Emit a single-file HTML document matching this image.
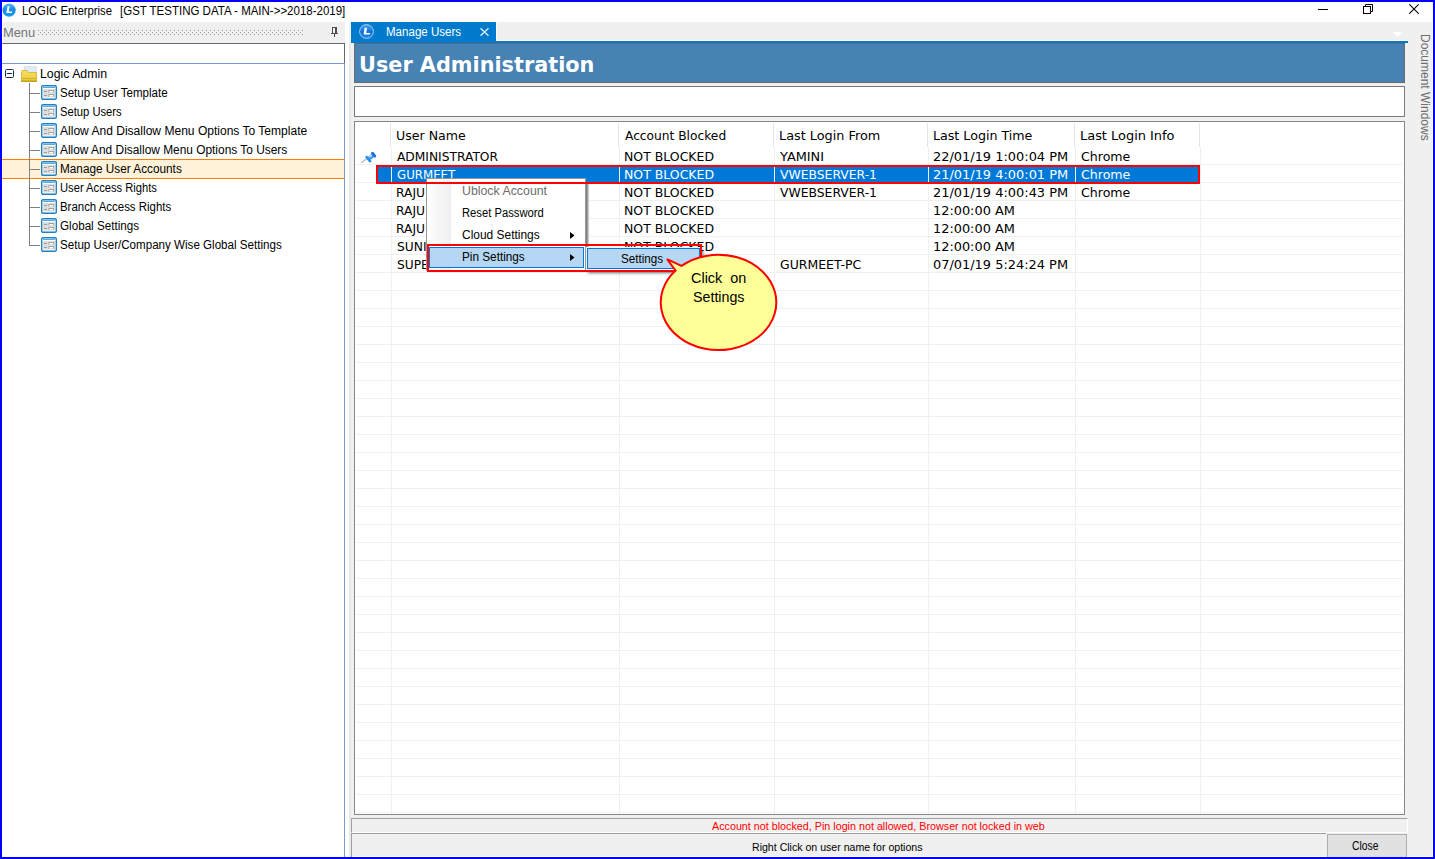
<!DOCTYPE html>
<html lang="en">
<head>
<meta charset="utf-8">
<title>LOGIC Enterprise</title>
<style>
html,body{margin:0;padding:0;}
body{width:1435px;height:859px;position:relative;overflow:hidden;background:#0000ff;font-family:"Liberation Sans",sans-serif;font-size:12px;color:#000;}
.a{position:absolute;}
.t{position:absolute;white-space:nowrap;line-height:1;}
#win{left:2px;top:2px;width:1431px;height:855px;background:#f0f0f0;box-sizing:border-box;border:1px solid #fff;}
#title{left:2px;top:2px;width:1431px;height:20px;background:#fff;}
.seg{font-family:"Liberation Sans",sans-serif;font-size:12px;}
.vd{font-family:"DejaVu Sans","Liberation Sans",sans-serif;font-size:12px;}
/* tree */
.ti{position:absolute;left:41px;width:16px;height:15px;}
.tl{position:absolute;left:60px;white-space:nowrap;line-height:1;font-size:12px;}
.hc{position:absolute;left:29px;width:11px;height:1px;background:#808080;}
/* grid */
.gl{position:absolute;left:356px;width:1047px;height:1px;background:#f0f0f0;}
.vl{position:absolute;top:147px;width:1px;height:667px;background:#f0f0f0;}
.c{position:absolute;white-space:nowrap;line-height:1;font-family:"DejaVu Sans","Liberation Sans",sans-serif;font-size:12px;}
.w{color:#fff;}
.mi{position:absolute;white-space:nowrap;line-height:1;font-size:12px;left:462px;}
</style>
</head>
<body>
<div id="win" class="a"></div>
<div id="title" class="a"></div>

<!-- title bar -->
<svg class="a" style="left:2px;top:3px" width="15" height="15" viewBox="0 0 15 15">
  <defs><linearGradient id="lg" x1="0" y1="0" x2="0" y2="1"><stop offset="0" stop-color="#5db8f6"/><stop offset="0.45" stop-color="#1a8be6"/><stop offset="1" stop-color="#0d9cf2"/></linearGradient></defs>
  <circle cx="7.1" cy="7.05" r="6.6" fill="url(#lg)"/>
  <path d="M5.6 3.3 L7.7 3.3 L6.7 8.6 L10.3 8.6 L10 10.1 L4.3 10.1 Z" fill="#fff"/>
</svg>
<div class="t seg" id="ttl" style="left:21.7px;transform-origin:0 0;transform:scaleX(0.9436);top:5px;">LOGIC Enterprise</div>
<div class="t seg" id="ttl2" style="left:119.79px;transform-origin:0 0;transform:scaleX(0.9578);top:5px;">[GST TESTING DATA - MAIN-&gt;&gt;2018-2019]</div>
<div class="a" style="left:1318px;top:9px;width:10px;height:1px;background:#000"></div>
<svg class="a" style="left:1363px;top:4px" width="10" height="10" viewBox="0 0 10 10" fill="none" stroke="#000" stroke-width="1">
  <rect x="0.5" y="2.5" width="7" height="7"/><path d="M2.5 2.5V0.5H9.5V7.5H7.5"/>
</svg>
<svg class="a" style="left:1409px;top:4px" width="10" height="10" viewBox="0 0 10 10" stroke="#000" stroke-width="1.05"><path d="M0.3 0.3L9.7 9.7M9.7 0.3L0.3 9.7"/></svg>

<!-- left panel -->
<div class="t seg" id="menu" style="left:3.48px;transform-origin:0 0;transform:scaleX(1.0709);top:27px;color:#757575;">Menu</div>
<svg class="a" style="left:38px;top:30px" width="265" height="5" viewBox="0 0 265 5"><defs><pattern id="gp" width="4" height="4" patternUnits="userSpaceOnUse"><rect x="0" y="0" width="1" height="1" fill="#999"/><rect x="2" y="2" width="1" height="1" fill="#999"/></pattern></defs><rect width="265" height="5" fill="url(#gp)"/></svg>
<svg class="a" style="left:331px;top:27px" width="7" height="10" viewBox="0 0 7 10" fill="#505050"><rect x="1" y="0" width="1" height="6"/><rect x="1" y="0" width="5" height="1"/><rect x="4" y="0" width="2" height="6"/><rect x="0" y="6" width="7" height="1"/><rect x="3" y="7" width="1" height="3"/></svg>
<div class="a" style="left:2px;top:43px;width:343px;height:814px;background:#fff;"></div>
<div class="a" style="left:2px;top:43px;width:343px;height:1px;background:#696969;"></div>
<div class="a" style="left:344px;top:43px;width:1px;height:20px;background:#696969;"></div>
<div class="a" style="left:2px;top:63px;width:343px;height:1px;background:#7a9bd2;"></div>
<div class="a" style="left:344px;top:63px;width:1px;height:794px;background:#7a9bd2;"></div>

<div class="a" style="left:345px;top:22px;width:4px;height:835px;background:#fff;"></div>
<div class="a" style="left:349px;top:43px;width:2px;height:814px;background:#e9e9ec;"></div>
<!-- tree -->
<div class="a" style="left:2px;top:159px;width:342px;height:20px;background:#fff2d9;border-top:1px solid #ff8000;border-bottom:1px solid #ff8000;box-sizing:border-box;"></div>
<div class="a" style="left:5px;top:69px;width:9px;height:9px;box-sizing:border-box;border:1px solid #10305a;border-radius:1.5px;background:#fff"></div>
<div class="a" style="left:7px;top:73px;width:5px;height:1px;background:#0a1f3f"></div>
<svg class="a" style="left:21px;top:66px" width="16" height="16" viewBox="0 0 16 16">
  <defs><linearGradient id="fg" x1="0" y1="0" x2="0" y2="1"><stop offset="0" stop-color="#f5e070"/><stop offset="0.55" stop-color="#efd24c"/><stop offset="1" stop-color="#e4c232"/></linearGradient></defs>
  <rect x="3.5" y="0.5" width="12" height="8" fill="#dcebf6" stroke="#dfe3e6" stroke-width="1"/>
  <path d="M0 5.5 Q0 4 1.5 4 H5.5 Q6.5 4 7 5 L7.6 6 H16 V16 H0 Z" fill="url(#fg)"/>
  <path d="M0.5 5.5 Q0.5 4.5 1.5 4.5 H5.5 Q6.2 4.5 6.7 5.3 L7.3 6.5 H15.5 V15.5 H0.5 Z" fill="none" stroke="#dcbc36" stroke-width="1"/>
  <rect x="0.5" y="12" width="15" height="1" fill="#d3b32a"/>
  <rect x="0" y="14.5" width="16" height="1.5" fill="#c4a11c"/>
</svg>
<div class="tl" id="tlr" style="left:39.53px;transform-origin:0 0;transform:scaleX(1.0247);top:68px">Logic Admin</div>
<div class="a" style="left:29px;top:83px;width:1px;height:162px;background:#808080"></div>
<div class="hc" style="top:93px"></div>
<svg class="ti" style="top:85px" width="16" height="15" viewBox="0 0 16 15"><rect x="0.7" y="0.7" width="14.6" height="13.6" rx="1.4" fill="#fff" stroke="#1c82c2" stroke-width="1.4"/><rect x="2" y="2" width="12" height="1" fill="#55ace3"/><rect x="2" y="4" width="12" height="8.5" fill="#dedede"/><rect x="3" y="6" width="3" height="1" fill="#9c9c9c"/><rect x="7.5" y="5" width="5.5" height="2.6" fill="#9a9a9a"/><rect x="8.3" y="5.9" width="3.9" height="1.7" fill="#fff"/><rect x="3" y="10" width="3" height="1" fill="#9c9c9c"/><rect x="7.5" y="9" width="5.5" height="2.6" fill="#9a9a9a"/><rect x="8.3" y="9.9" width="3.9" height="1.7" fill="#fff"/></svg>
<div class="tl" id="tl0" style="left:59.72px;transform-origin:0 0;transform:scaleX(0.9619);top:87px">Setup User Template</div>
<div class="hc" style="top:112px"></div>
<svg class="ti" style="top:104px" width="16" height="15" viewBox="0 0 16 15"><rect x="0.7" y="0.7" width="14.6" height="13.6" rx="1.4" fill="#fff" stroke="#1c82c2" stroke-width="1.4"/><rect x="2" y="2" width="12" height="1" fill="#55ace3"/><rect x="2" y="4" width="12" height="8.5" fill="#dedede"/><rect x="3" y="6" width="3" height="1" fill="#9c9c9c"/><rect x="7.5" y="5" width="5.5" height="2.6" fill="#9a9a9a"/><rect x="8.3" y="5.9" width="3.9" height="1.7" fill="#fff"/><rect x="3" y="10" width="3" height="1" fill="#9c9c9c"/><rect x="7.5" y="9" width="5.5" height="2.6" fill="#9a9a9a"/><rect x="8.3" y="9.9" width="3.9" height="1.7" fill="#fff"/></svg>
<div class="tl" id="tl1" style="left:59.73px;transform-origin:0 0;transform:scaleX(0.9335);top:106px">Setup Users</div>
<div class="hc" style="top:131px"></div>
<svg class="ti" style="top:123px" width="16" height="15" viewBox="0 0 16 15"><rect x="0.7" y="0.7" width="14.6" height="13.6" rx="1.4" fill="#fff" stroke="#1c82c2" stroke-width="1.4"/><rect x="2" y="2" width="12" height="1" fill="#55ace3"/><rect x="2" y="4" width="12" height="8.5" fill="#dedede"/><rect x="3" y="6" width="3" height="1" fill="#9c9c9c"/><rect x="7.5" y="5" width="5.5" height="2.6" fill="#9a9a9a"/><rect x="8.3" y="5.9" width="3.9" height="1.7" fill="#fff"/><rect x="3" y="10" width="3" height="1" fill="#9c9c9c"/><rect x="7.5" y="9" width="5.5" height="2.6" fill="#9a9a9a"/><rect x="8.3" y="9.9" width="3.9" height="1.7" fill="#fff"/></svg>
<div class="tl" id="tl2" style="left:60.2px;transform-origin:0 0;transform:scaleX(1.0035);top:125px">Allow And Disallow Menu Options To Template</div>
<div class="hc" style="top:150px"></div>
<svg class="ti" style="top:142px" width="16" height="15" viewBox="0 0 16 15"><rect x="0.7" y="0.7" width="14.6" height="13.6" rx="1.4" fill="#fff" stroke="#1c82c2" stroke-width="1.4"/><rect x="2" y="2" width="12" height="1" fill="#55ace3"/><rect x="2" y="4" width="12" height="8.5" fill="#dedede"/><rect x="3" y="6" width="3" height="1" fill="#9c9c9c"/><rect x="7.5" y="5" width="5.5" height="2.6" fill="#9a9a9a"/><rect x="8.3" y="5.9" width="3.9" height="1.7" fill="#fff"/><rect x="3" y="10" width="3" height="1" fill="#9c9c9c"/><rect x="7.5" y="9" width="5.5" height="2.6" fill="#9a9a9a"/><rect x="8.3" y="9.9" width="3.9" height="1.7" fill="#fff"/></svg>
<div class="tl" id="tl3" style="left:60.2px;transform-origin:0 0;transform:scaleX(0.9913);top:144px">Allow And Disallow Menu Options To Users</div>
<div class="hc" style="top:169px"></div>
<svg class="ti" style="top:161px" width="16" height="15" viewBox="0 0 16 15"><rect x="0.7" y="0.7" width="14.6" height="13.6" rx="1.4" fill="#fff" stroke="#1c82c2" stroke-width="1.4"/><rect x="2" y="2" width="12" height="1" fill="#55ace3"/><rect x="2" y="4" width="12" height="8.5" fill="#dedede"/><rect x="3" y="6" width="3" height="1" fill="#9c9c9c"/><rect x="7.5" y="5" width="5.5" height="2.6" fill="#9a9a9a"/><rect x="8.3" y="5.9" width="3.9" height="1.7" fill="#fff"/><rect x="3" y="10" width="3" height="1" fill="#9c9c9c"/><rect x="7.5" y="9" width="5.5" height="2.6" fill="#9a9a9a"/><rect x="8.3" y="9.9" width="3.9" height="1.7" fill="#fff"/></svg>
<div class="tl" id="tl4" style="left:59.97px;transform-origin:0 0;transform:scaleX(0.9815);top:163px">Manage User Accounts</div>
<div class="hc" style="top:188px"></div>
<svg class="ti" style="top:180px" width="16" height="15" viewBox="0 0 16 15"><rect x="0.7" y="0.7" width="14.6" height="13.6" rx="1.4" fill="#fff" stroke="#1c82c2" stroke-width="1.4"/><rect x="2" y="2" width="12" height="1" fill="#55ace3"/><rect x="2" y="4" width="12" height="8.5" fill="#dedede"/><rect x="3" y="6" width="3" height="1" fill="#9c9c9c"/><rect x="7.5" y="5" width="5.5" height="2.6" fill="#9a9a9a"/><rect x="8.3" y="5.9" width="3.9" height="1.7" fill="#fff"/><rect x="3" y="10" width="3" height="1" fill="#9c9c9c"/><rect x="7.5" y="9" width="5.5" height="2.6" fill="#9a9a9a"/><rect x="8.3" y="9.9" width="3.9" height="1.7" fill="#fff"/></svg>
<div class="tl" id="tl5" style="left:60.46px;transform-origin:0 0;transform:scaleX(0.9314);top:182px">User Access Rights</div>
<div class="hc" style="top:207px"></div>
<svg class="ti" style="top:199px" width="16" height="15" viewBox="0 0 16 15"><rect x="0.7" y="0.7" width="14.6" height="13.6" rx="1.4" fill="#fff" stroke="#1c82c2" stroke-width="1.4"/><rect x="2" y="2" width="12" height="1" fill="#55ace3"/><rect x="2" y="4" width="12" height="8.5" fill="#dedede"/><rect x="3" y="6" width="3" height="1" fill="#9c9c9c"/><rect x="7.5" y="5" width="5.5" height="2.6" fill="#9a9a9a"/><rect x="8.3" y="5.9" width="3.9" height="1.7" fill="#fff"/><rect x="3" y="10" width="3" height="1" fill="#9c9c9c"/><rect x="7.5" y="9" width="5.5" height="2.6" fill="#9a9a9a"/><rect x="8.3" y="9.9" width="3.9" height="1.7" fill="#fff"/></svg>
<div class="tl" id="tl6" style="left:60.4px;transform-origin:0 0;transform:scaleX(0.9523);top:201px">Branch Access Rights</div>
<div class="hc" style="top:226px"></div>
<svg class="ti" style="top:218px" width="16" height="15" viewBox="0 0 16 15"><rect x="0.7" y="0.7" width="14.6" height="13.6" rx="1.4" fill="#fff" stroke="#1c82c2" stroke-width="1.4"/><rect x="2" y="2" width="12" height="1" fill="#55ace3"/><rect x="2" y="4" width="12" height="8.5" fill="#dedede"/><rect x="3" y="6" width="3" height="1" fill="#9c9c9c"/><rect x="7.5" y="5" width="5.5" height="2.6" fill="#9a9a9a"/><rect x="8.3" y="5.9" width="3.9" height="1.7" fill="#fff"/><rect x="3" y="10" width="3" height="1" fill="#9c9c9c"/><rect x="7.5" y="9" width="5.5" height="2.6" fill="#9a9a9a"/><rect x="8.3" y="9.9" width="3.9" height="1.7" fill="#fff"/></svg>
<div class="tl" id="tl7" style="left:60.12px;transform-origin:0 0;transform:scaleX(0.9716);top:220px">Global Settings</div>
<div class="hc" style="top:245px"></div>
<svg class="ti" style="top:237px" width="16" height="15" viewBox="0 0 16 15"><rect x="0.7" y="0.7" width="14.6" height="13.6" rx="1.4" fill="#fff" stroke="#1c82c2" stroke-width="1.4"/><rect x="2" y="2" width="12" height="1" fill="#55ace3"/><rect x="2" y="4" width="12" height="8.5" fill="#dedede"/><rect x="3" y="6" width="3" height="1" fill="#9c9c9c"/><rect x="7.5" y="5" width="5.5" height="2.6" fill="#9a9a9a"/><rect x="8.3" y="5.9" width="3.9" height="1.7" fill="#fff"/><rect x="3" y="10" width="3" height="1" fill="#9c9c9c"/><rect x="7.5" y="9" width="5.5" height="2.6" fill="#9a9a9a"/><rect x="8.3" y="9.9" width="3.9" height="1.7" fill="#fff"/></svg>
<div class="tl" id="tl8" style="left:59.72px;transform-origin:0 0;transform:scaleX(0.9662);top:239px">Setup User/Company Wise Global Settings</div>

<!-- splitter / tabs -->
<div class="a" style="left:496px;top:22px;width:1px;height:19px;background:#fdf9f4;"></div><div class="a" style="left:496px;top:40px;width:912px;height:1px;background:#fdf9f4;"></div><div class="a" style="left:351px;top:22px;width:145px;height:21px;background:#007acc;"></div>
<div class="a" style="left:351px;top:41px;width:1057px;height:2px;background:#007acc;"></div>
<svg class="a" style="left:359px;top:24px" width="15" height="15" viewBox="0 0 15 15">
  <defs><linearGradient id="lg2" x1="0" y1="0" x2="0" y2="1"><stop offset="0" stop-color="#4aa3ee"/><stop offset="0.5" stop-color="#1173d8"/><stop offset="1" stop-color="#1d8be6"/></linearGradient></defs>
  <circle cx="7.5" cy="7.5" r="6.9" fill="url(#lg2)" stroke="#b5d3ee" stroke-width="0.9"/>
  <path d="M5.6 3.8 L8 3.8 L7.2 9 L11 9 L10.8 10.6 L4.6 10.6 Z" fill="#fff"/>
</svg>
<div class="t seg w" id="tabtxt" style="left:386.49px;transform-origin:0 0;transform:scaleX(0.9624);top:26px;">Manage Users</div>
<svg class="a" style="left:480px;top:28px" width="9" height="8" viewBox="0 0 9 8" stroke="#fff" stroke-width="1.15"><path d="M0.5 0.3L8.5 7.7M8.5 0.3L0.5 7.7"/></svg>
<svg class="a" style="left:1393px;top:32px" width="9" height="5" viewBox="0 0 9 5"><path d="M0 0H9L4.5 4.5Z" fill="#fff"/></svg>
<div class="t seg" id="docwin" style="left:1431px;top:34px;color:#6d6d6d;transform-origin:0 0;transform:rotate(90deg);">Document Windows</div>

<!-- header -->
<div class="a" style="left:354px;top:43px;width:1051px;height:40px;background:#4682b4;box-sizing:border-box;border:1px solid #6b6b6b;border-top-color:#5a6a78;"></div>
<div class="t" id="ua" style="left:359.27px;transform-origin:0 0;transform:scaleX(0.9752);top:54px;font-family:'DejaVu Sans',sans-serif;font-weight:bold;font-size:21.33px;color:#fff;">User Administration</div>
<div class="a" style="left:354px;top:86px;width:1051px;height:31px;background:#fff;box-sizing:border-box;border:1px solid #7a7a7a;"></div>

<!-- grid -->
<div class="a" style="left:354px;top:121px;width:1051px;height:694px;background:#fff;box-sizing:border-box;border:1px solid #828790;"></div>
<div class="gl" style="top:164px"></div>
<div class="gl" style="top:182px"></div>
<div class="gl" style="top:200px"></div>
<div class="gl" style="top:218px"></div>
<div class="gl" style="top:236px"></div>
<div class="gl" style="top:254px"></div>
<div class="gl" style="top:272px"></div>
<div class="gl" style="top:290px"></div>
<div class="gl" style="top:308px"></div>
<div class="gl" style="top:326px"></div>
<div class="gl" style="top:344px"></div>
<div class="gl" style="top:362px"></div>
<div class="gl" style="top:380px"></div>
<div class="gl" style="top:398px"></div>
<div class="gl" style="top:416px"></div>
<div class="gl" style="top:434px"></div>
<div class="gl" style="top:452px"></div>
<div class="gl" style="top:470px"></div>
<div class="gl" style="top:488px"></div>
<div class="gl" style="top:506px"></div>
<div class="gl" style="top:524px"></div>
<div class="gl" style="top:542px"></div>
<div class="gl" style="top:560px"></div>
<div class="gl" style="top:578px"></div>
<div class="gl" style="top:596px"></div>
<div class="gl" style="top:614px"></div>
<div class="gl" style="top:632px"></div>
<div class="gl" style="top:650px"></div>
<div class="gl" style="top:668px"></div>
<div class="gl" style="top:686px"></div>
<div class="gl" style="top:704px"></div>
<div class="gl" style="top:722px"></div>
<div class="gl" style="top:740px"></div>
<div class="gl" style="top:758px"></div>
<div class="gl" style="top:776px"></div>
<div class="gl" style="top:794px"></div>
<div class="gl" style="top:812px"></div>
<div class="vl" style="left:391px"></div>
<div class="a" style="left:390px;top:123px;width:1px;height:24px;background:#e5e5e8"></div>
<div class="vl" style="left:619px"></div>
<div class="a" style="left:618px;top:123px;width:1px;height:24px;background:#e5e5e8"></div>
<div class="vl" style="left:774px"></div>
<div class="a" style="left:773px;top:123px;width:1px;height:24px;background:#e5e5e8"></div>
<div class="vl" style="left:928px"></div>
<div class="a" style="left:927px;top:123px;width:1px;height:24px;background:#e5e5e8"></div>
<div class="vl" style="left:1075px"></div>
<div class="a" style="left:1074px;top:123px;width:1px;height:24px;background:#e5e5e8"></div>
<div class="vl" style="left:1200px"></div>
<div class="a" style="left:1199px;top:123px;width:1px;height:24px;background:#e5e5e8"></div>
<div class="a" style="left:378px;top:167px;width:820px;height:15px;background:#0078d7"></div>
<div class="a" style="left:391px;top:167px;width:1px;height:15px;background:#f0f0f0"></div>
<div class="a" style="left:619px;top:167px;width:1px;height:15px;background:#f0f0f0"></div>
<div class="a" style="left:774px;top:167px;width:1px;height:15px;background:#f0f0f0"></div>
<div class="a" style="left:928px;top:167px;width:1px;height:15px;background:#f0f0f0"></div>
<div class="a" style="left:1075px;top:167px;width:1px;height:15px;background:#f0f0f0"></div>
<div class="c" id="h0" style="left:396.35px;transform-origin:0 0;transform:scaleX(1.0472);top:130px">User Name</div>
<div class="c" id="h1" style="left:624.95px;transform-origin:0 0;transform:scaleX(1.0186);top:130px">Account Blocked</div>
<div class="c" id="h2" style="left:778.97px;transform-origin:0 0;transform:scaleX(1.0692);top:130px">Last Login From</div>
<div class="c" id="h3" style="left:932.79px;transform-origin:0 0;transform:scaleX(1.0531);top:130px">Last Login Time</div>
<div class="c" id="h4" style="left:1080.26px;transform-origin:0 0;transform:scaleX(1.0778);top:130px">Last Login Info</div>
<div class="c" id="r0c0" style="left:397.35px;transform-origin:0 0;transform:scaleX(1.0197);top:151px">ADMINISTRATOR</div>
<div class="c" id="r0c1" style="left:623.8px;transform-origin:0 0;transform:scaleX(1.0397);top:151px">NOT BLOCKED</div>
<div class="c" id="r0c2" style="left:780.25px;transform-origin:0 0;transform:scaleX(1.0745);top:151px">YAMINI</div>
<div class="c" id="r0c3" style="left:933.08px;transform-origin:0 0;transform:scaleX(1.0781);top:151px">22/01/19 1:00:04 PM</div>
<div class="c" id="r0c4" style="left:1080.82px;transform-origin:0 0;transform:scaleX(1.0484);top:151px">Chrome</div>
<div class="c w" id="r1c0" style="left:396.76px;transform-origin:0 0;transform:scaleX(0.9832);top:169px">GURMEET</div>
<div class="c w" id="r1c1" style="left:623.8px;transform-origin:0 0;transform:scaleX(1.0397);top:169px">NOT BLOCKED</div>
<div class="c w" id="r1c2" style="left:780.15px;transform-origin:0 0;transform:scaleX(1.0298);top:169px">VWEBSERVER-1</div>
<div class="c w" id="r1c3" style="left:933.08px;transform-origin:0 0;transform:scaleX(1.0781);top:169px">21/01/19 4:00:01 PM</div>
<div class="c w" id="r1c4" style="left:1080.82px;transform-origin:0 0;transform:scaleX(1.0484);top:169px">Chrome</div>
<div class="c" id="r2c0" style="left:396.23px;transform-origin:0 0;transform:scaleX(1.02);top:187px">RAJU</div>
<div class="c" id="r2c1" style="left:623.8px;transform-origin:0 0;transform:scaleX(1.0397);top:187px">NOT BLOCKED</div>
<div class="c" id="r2c2" style="left:780.15px;transform-origin:0 0;transform:scaleX(1.0298);top:187px">VWEBSERVER-1</div>
<div class="c" id="r2c3" style="left:933.08px;transform-origin:0 0;transform:scaleX(1.0781);top:187px">21/01/19 4:00:43 PM</div>
<div class="c" id="r2c4" style="left:1080.82px;transform-origin:0 0;transform:scaleX(1.0484);top:187px">Chrome</div>
<div class="c" id="r3c0" style="left:396.23px;transform-origin:0 0;transform:scaleX(1.02);top:205px">RAJU</div>
<div class="c" id="r3c1" style="left:623.8px;transform-origin:0 0;transform:scaleX(1.0397);top:205px">NOT BLOCKED</div>
<div class="c" id="r3c3" style="left:932.61px;transform-origin:0 0;transform:scaleX(1.0729);top:205px">12:00:00 AM</div>
<div class="c" id="r4c0" style="left:396.23px;transform-origin:0 0;transform:scaleX(1.02);top:223px">RAJU</div>
<div class="c" id="r4c1" style="left:623.8px;transform-origin:0 0;transform:scaleX(1.0397);top:223px">NOT BLOCKED</div>
<div class="c" id="r4c3" style="left:932.61px;transform-origin:0 0;transform:scaleX(1.0729);top:223px">12:00:00 AM</div>
<div class="c" id="r5c0" style="left:396.63px;transform-origin:0 0;transform:scaleX(1.02);top:241px">SUNIL</div>
<div class="c" id="r5c1" style="left:623.8px;transform-origin:0 0;transform:scaleX(1.0397);top:241px">NOT BLOCKED</div>
<div class="c" id="r5c3" style="left:932.61px;transform-origin:0 0;transform:scaleX(1.0729);top:241px">12:00:00 AM</div>
<div class="c" id="r6c0" style="left:396.63px;transform-origin:0 0;transform:scaleX(1.02);top:259px">SUPER</div>
<div class="c" id="r6c2" style="left:779.52px;transform-origin:0 0;transform:scaleX(1.0386);top:259px">GURMEET-PC</div>
<div class="c" id="r6c3" style="left:933.19px;transform-origin:0 0;transform:scaleX(1.0772);top:259px">07/01/19 5:24:24 PM</div>
<svg class="a" style="left:360px;top:150px" width="18" height="14" viewBox="360 150 18 14">
 <line x1="361.2" y1="162.9" x2="366.6" y2="158.7" stroke="#b0b0b0" stroke-width="1.1"/>
 <g transform="translate(371,156.9) rotate(-40)">
  <rect x="-4.7" y="-3.9" width="2.5" height="7.8" rx="1" fill="#2b8be6"/>
  <rect x="-2.4" y="-2" width="4.8" height="4" fill="#3b9bee"/>
  <rect x="2" y="-3.2" width="2.9" height="6.4" rx="1.4" fill="#1773dc"/>
  <rect x="-1.2" y="-1.5" width="3" height="1.2" fill="#e2f1fc"/>
 </g>
</svg>

<!-- status -->
<div class="a" style="left:351px;top:818px;width:1057px;height:15px;box-sizing:border-box;border-top:1px solid #a0a0a0;border-left:1px solid #a0a0a0;border-right:1px solid #fff;border-bottom:1px solid #fff;"></div>
<div class="t" id="st1" style="left:712.0px;transform-origin:0 0;transform:scaleX(0.9769);top:821px;color:#ff0000;font-size:11px;">Account not blocked, Pin login not allowed, Browser not locked in web</div>
<div class="a" style="left:351px;top:833px;width:975px;height:24px;box-sizing:border-box;border-top:1px solid #a0a0a0;border-left:1px solid #a0a0a0;"></div>
<div class="t" id="st2" style="left:752.33px;transform-origin:0 0;transform:scaleX(0.9616);top:842px;font-size:11px;">Right Click on user name for options</div>
<div class="a" style="left:1327px;top:834px;width:80px;height:23px;box-sizing:border-box;border:1px solid #adadad;border-bottom:none;background:#e1e1e1;"></div>
<div class="t" id="closeb" style="left:1352.08px;transform-origin:0 0;transform:scaleX(0.8594);top:840px;font-size:12px;">Close</div>

<!-- context menu -->
<div class="a" style="left:586px;top:182px;width:3px;height:90px;background:linear-gradient(90deg,#6f6f6f,#9b9b9b 45%,#dcdcdc);"></div>
<div class="a" style="left:426px;top:178px;width:160px;height:93px;box-sizing:border-box;background:#fff;border:1px solid #979797;"></div>
<div class="a" style="left:427px;top:180px;width:24px;height:90px;background:linear-gradient(90deg,#ffffff,#f9f9f9 30%,#f0f0f0);"></div>
<div class="mi" id="m0" style="left:461.97px;transform-origin:0 0;transform:scaleX(1.028);top:185px;color:#6d6d6d">Ublock Account</div>
<div class="mi" id="m1" style="left:462.01px;transform-origin:0 0;transform:scaleX(0.9359);top:207px">Reset Password</div>
<div class="mi" id="m2" style="left:461.7px;transform-origin:0 0;transform:scaleX(0.9955);top:229px">Cloud Settings</div>
<svg class="a" style="left:570px;top:232px" width="5" height="7" viewBox="0 0 5 7"><path d="M0 0L4.5 3.5L0 7Z" fill="#000"/></svg>
<div class="a" style="left:429px;top:247px;width:155px;height:21px;box-sizing:border-box;background:#b5d7f3;border:1px solid #0078d7;"></div>
<div class="mi" id="m3" style="left:461.97px;transform-origin:0 0;transform:scaleX(0.9795);top:251px">Pin Settings</div>
<svg class="a" style="left:570px;top:254px" width="5" height="7" viewBox="0 0 5 7"><path d="M0 0L4.5 3.5L0 7Z" fill="#000"/></svg>

<!-- red rect around selected row (drawn over the menu) -->
<div class="a" style="left:376px;top:165px;width:824px;height:19px;box-sizing:border-box;border:2px solid #ff0000;"></div>

<!-- submenu -->
<div class="a" style="left:586px;top:247px;width:115px;height:23px;background:#f4f4f4;box-shadow:2px 3px 3px rgba(0,0,0,0.55);"></div>
<div class="a" style="left:587px;top:248px;width:113px;height:21px;box-sizing:border-box;background:#b5d7f3;border:1px solid #0078d7;"></div>
<div class="mi" id="m4" style="left:620.91px;transform-origin:0 0;transform:scaleX(0.9727);top:253px">Settings</div>

<!-- red rect around pin settings -->
<div class="a" style="left:427px;top:244px;width:275px;height:28px;box-sizing:border-box;border:2px solid #ff0000;"></div>

<!-- callout -->
<svg class="a" style="left:650px;top:245px" width="140" height="115" viewBox="650 245 140 115">
  <path d="M667 259.2 L681.5 265.84 A57.8 47.65 0 1 1 675.6 270.52 Z" fill="#ffff99" stroke="#ff0000" stroke-width="2" stroke-linejoin="miter"/>
</svg>
<div class="t" id="co1" style="left:690.62px;transform-origin:0 0;transform:scaleX(1.0318);top:271px;font-size:14px;">Click&nbsp;&nbsp;on</div>
<div class="t" id="co2" style="left:692.75px;transform-origin:0 0;transform:scaleX(1.0179);top:290px;font-size:14px;">Settings</div>
</body>
</html>
